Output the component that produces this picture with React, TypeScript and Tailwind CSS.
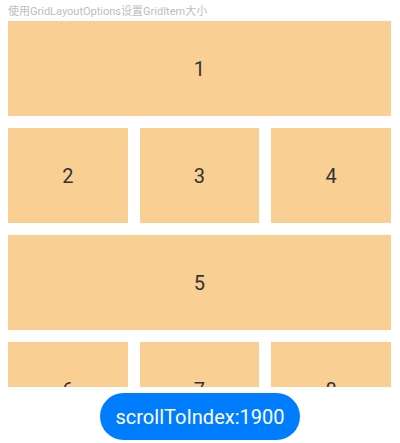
import React from 'react'

// layout: 1 full row, then 3 small, repeating
const rows: number[][] = [[1], [2, 3, 4], [5], [6, 7, 8], [9], [10, 11, 12]]

export default function App() {
  return (
    <div className="w-[400px] h-[443px] bg-white flex flex-col overflow-hidden" style={{ fontFamily: 'Roboto, "Noto Sans CJK SC", sans-serif' }}>
      <div className="h-[21px] pl-2 pt-[2px] text-[11px] leading-[19px] text-[#bdbdbd]">
        使用GridLayoutOptions设置GridItem大小
      </div>
      <div className="ml-2 w-[383px] h-[366px] overflow-hidden">
        <div className="grid grid-cols-3 gap-3">
          {rows.map((row) =>
            row.map((n) => (
              <div
                key={n}
                className={`h-[95px] bg-[#f9cf93] flex items-center justify-center text-[20px] text-[#333333] ${
                  row.length === 1 ? 'col-span-3' : ''
                }`}
              >
                {n}
              </div>
            ))
          )}
        </div>
      </div>
      <div className="flex justify-center mt-[6px]">
        <button
          type="button"
          className="w-[200px] h-[47px] rounded-full bg-[#007dff] text-white text-[20px]"
        >
          scrollToIndex:1900
        </button>
      </div>
    </div>
  )
}
